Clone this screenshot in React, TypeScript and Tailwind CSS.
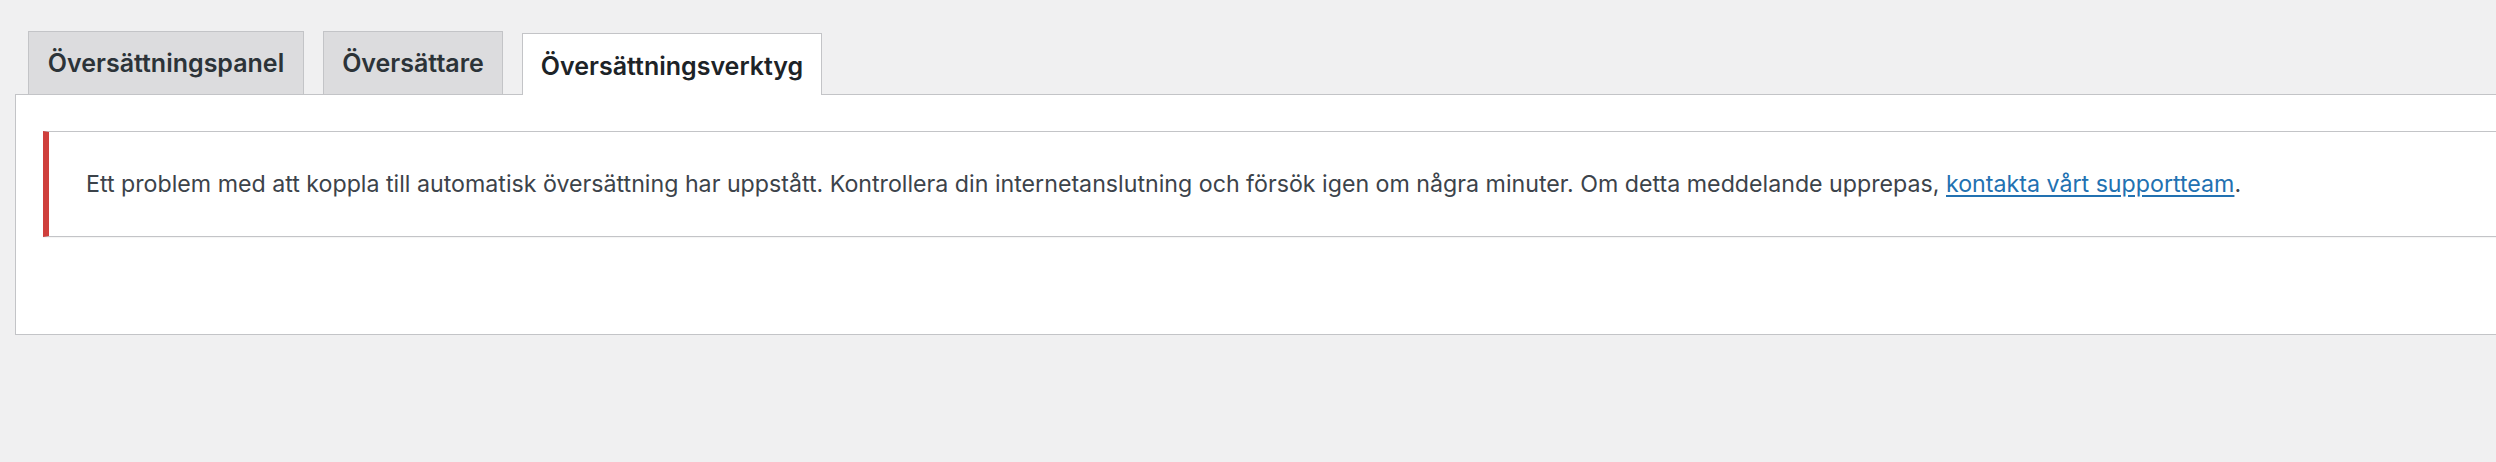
import React from "react";

const tabs = [
  { label: "Översättningspanel", width: "w-[276px]", active: false },
  { label: "Översättare", width: "w-[180px]", active: false },
  { label: "Översättningsverktyg", width: "w-[300px]", active: true },
];

export default function App() {
  return (
    <div
      className="h-[462px] w-full overflow-hidden bg-[#f0f0f1] text-[#3c434a]"
      style={{ fontFamily: "Inter, 'Noto Sans', sans-serif" }}
    >
      {/* Tabs */}
      <div className="flex items-end gap-[19px] pl-[28px] pt-[31px]">
        {tabs.map((tab) =>
          tab.active ? (
            <div
              key={tab.label}
              className={`${tab.width} relative z-10 -mb-px flex h-[62px] items-center justify-center border border-b-0 border-[#c3c4c7] bg-white pt-[4px] text-[25px] font-semibold text-[#1d2327]`}
            >
              {tab.label}
            </div>
          ) : (
            <div
              key={tab.label}
              className={`${tab.width} flex h-[63px] items-center justify-center border border-b-0 border-[#c3c4c7] bg-[#dcdcde] pt-[2px] text-[25px] font-semibold text-[#2c3338]`}
            >
              {tab.label}
            </div>
          )
        )}
      </div>

      {/* Panel */}
      <div className="ml-[15px] mr-[-40px] border border-[#c3c4c7] bg-white pb-[97px] pl-[27px] pt-[36px]">
        <div className="flex h-[106px] items-center border border-l-[6px] border-[#c3c4c7] border-l-[#cf3f3c] pl-[37px] shadow-[0_1px_1px_rgba(0,0,0,0.04)]">
          <p className="whitespace-nowrap text-[23.2px] text-[#3c434a]">
            Ett problem med att koppla till automatisk översättning har uppstått. Kontrollera din internetanslutning och försök igen om några minuter. Om detta meddelande upprepas,{" "}
            <a href="#" className="text-[#2271b1] underline underline-offset-[3px]">
              kontakta vårt supportteam
            </a>
            .
          </p>
        </div>
      </div>
    </div>
  );
}
